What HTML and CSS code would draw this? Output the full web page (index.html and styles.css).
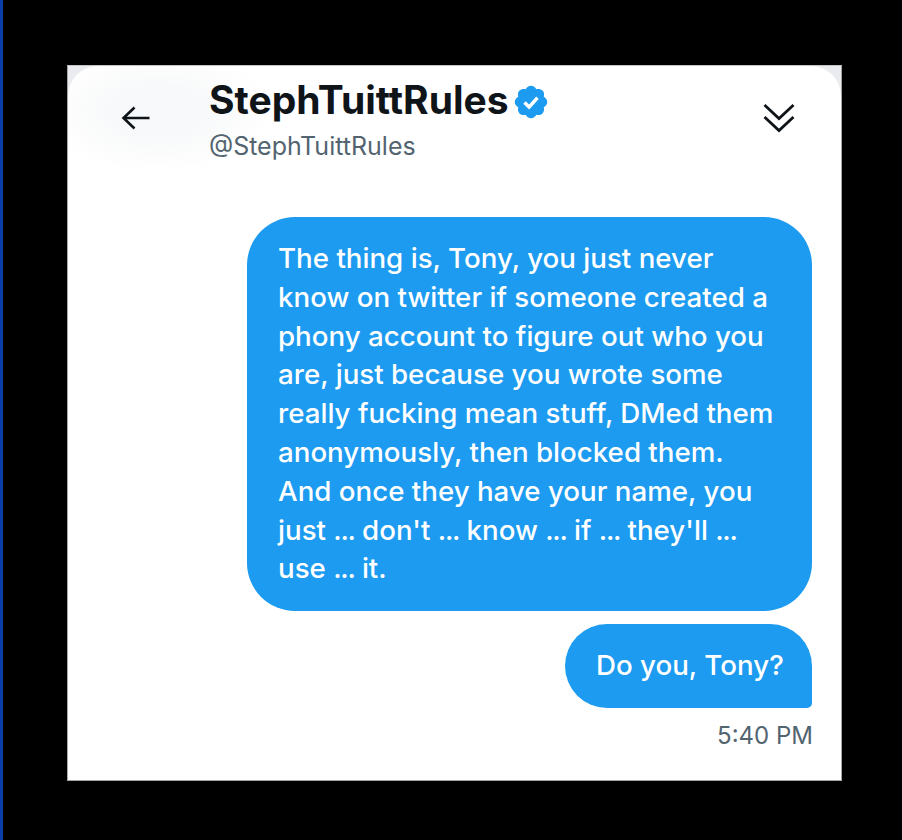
FILE: index.html
```html
<!DOCTYPE html>
<html lang="en">
<head>
<meta charset="utf-8">
<title>StephTuittRules</title>
<link rel="stylesheet" href="styles.css">
</head>
<body>
<main class="card">
  <div class="panel">
    <header class="head">
      <svg class="back" viewBox="0 0 30 24" aria-hidden="true"><path d="M28.500 12H2.500M13.500 1.500 2.500 12l11 10.500"/></svg>
      <div class="who">
        <div class="name-row">
          <span class="name">StephTuittRules</span>
          <svg class="badge" viewBox="0 0 24 24" aria-hidden="true"><path class="badge-fill" d="M22.25 12c0-1.43-.88-2.67-2.19-3.34.46-1.39.2-2.9-.81-3.91s-2.52-1.27-3.91-.81c-.66-1.31-1.91-2.19-3.34-2.19s-2.67.88-3.33 2.19c-1.4-.46-2.91-.2-3.92.81s-1.26 2.52-.8 3.91c-1.31.67-2.2 1.91-2.2 3.34s.89 2.67 2.2 3.34c-.46 1.39-.21 2.9.8 3.91s2.52 1.26 3.91.81c.67 1.31 1.91 2.19 3.34 2.19s2.68-.88 3.34-2.19c1.39.45 2.9.2 3.91-.81s1.27-2.52.81-3.91c1.31-.67 2.19-1.91 2.19-3.34z"/><path class="badge-check" d="M7.900 12.300l2.900 2.900 5.300-5.900"/></svg>
        </div>
        <div class="handle">@StephTuittRules</div>
      </div>
      <svg class="collapse" viewBox="0 0 32 30" aria-hidden="true"><path d="M1.500 2 16 15.500 30.500 2M1.500 14 16 27.500 30.500 14"/></svg>
    </header>
    <section class="thread">
      <p class="bubble long">The thing is, Tony, you just never<br>know on twitter if someone created a<br>phony account to figure out who you<br>are, just because you wrote some<br>really fucking mean stuff, DMed them<br>anonymously, then blocked them.<br>And once they have your name, you<br>just <span class="dots">...</span> don't <span class="dots">...</span> know <span class="dots">...</span> if <span class="dots">...</span> they'll <span class="dots">...</span><br>use <span class="dots">...</span> it.</p>
      <p class="bubble short">Do you, Tony?</p>
      <time class="time">5:40 PM</time>
    </section>
  </div>
</main>
</body>
</html>
```
FILE: styles.css
```css
html, body {
  margin: 0;
  height: 840px;
  overflow: hidden;
}
body {
  box-sizing: border-box;
  width: 902px;
  background: #000;
  border-left: 3px solid #0a3ea8;
  padding: 65px 0 0 64px;
  font-family: Inter, "Liberation Sans", sans-serif;
}
.card {
  box-sizing: border-box;
  width: 775px;
  height: 716px;
  border: 1px solid #a6a6a6;
  border-top-color: #c4c4c4;
  background: #eaebef;
}
.panel {
  height: 100%;
  display: flex;
  flex-direction: column;
  border-radius: 30px 30px 0 0;
  background: radial-gradient(ellipse 115px 62px at 90px 45px, #f8f9fa 40%, #fff 100%);
}
.head {
  display: flex;
  align-items: flex-start;
  height: 151px;
  flex: none;
  color: #0f1419;
}
.back {
  width: 30px;
  height: 24px;
  margin: 40px 0 0 53px;
  flex: none;
  fill: none;
  stroke: #0f1419;
  stroke-width: 2.600;
}
.who {
  margin-left: 58px;
  width: 554px;
  flex: none;
}
.name-row {
  display: flex;
  align-items: center;
  gap: 3px;
  margin-top: 11px;
  height: 46px;
}
.name {
  font-size: 39px;
  font-weight: 700;
  line-height: 46px;
}
.badge {
  width: 38px;
  height: 38px;
  margin-top: 4px;
}
.badge-fill {
  fill: #1d9bf0;
}
.badge-check {
  fill: none;
  stroke: #fff;
  stroke-width: 2.200;
}
.handle {
  margin-top: 7px;
  font-size: 25px;
  line-height: 32px;
  color: #536471;
}
.collapse {
  width: 32px;
  height: 30px;
  margin: 37px 0 0 0;
  flex: none;
  fill: none;
  stroke: #0f1419;
  stroke-width: 2.800;
}
.thread {
  display: flex;
  flex-direction: column;
  align-items: flex-end;
  padding-right: 29px;
}
.bubble {
  margin: 0;
  box-sizing: border-box;
  background: #1d9bf0;
  color: #fff;
  font-size: 27.700px;
  font-weight: 450;
  line-height: 38.800px;
}
.dots {
  letter-spacing: -1.300px;
}
.long {
  width: 565px;
  height: 394px;
  padding: 22px 20px 0 31px;
  border-radius: 48px;
  white-space: nowrap;
}
.short {
  width: 247px;
  height: 84px;
  margin-top: 13px;
  padding: 22px 0 0 31px;
  border-radius: 42px 42px 5px 42px;
}
.time {
  margin: 12px -1px 0 0;
  font-size: 24px;
  line-height: 32px;
  color: #536471;
}
```
